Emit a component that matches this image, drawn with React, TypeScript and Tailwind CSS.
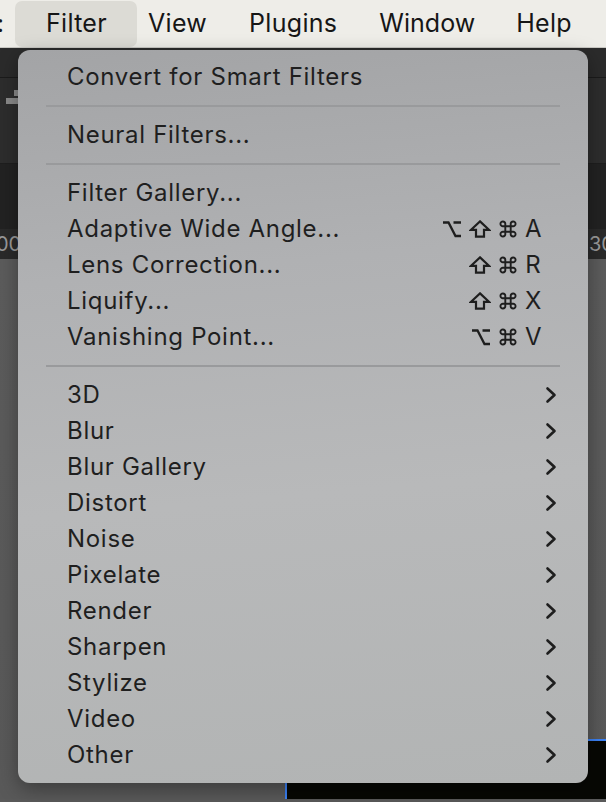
import React from "react";

const Chevron = () => (
  <svg width="12" height="18" viewBox="0 0 12 18" className="shrink-0">
    <path d="M2.5 2.5 L9.5 9 L2.5 15.5" fill="none" stroke="#1e1e1e" strokeWidth="2.6" strokeLinecap="round" strokeLinejoin="round" />
  </svg>
);

const Opt = () => (
  <svg width="20" height="18" viewBox="0 0 20 18">
    <path d="M1 2.5 H6.5 L13.5 16 H19 M11.5 2.5 H19" fill="none" stroke="#1e1e1e" strokeWidth="2.3" strokeLinejoin="miter" />
  </svg>
);

const Shift = () => (
  <svg width="22" height="18" viewBox="0 0 22 18">
    <path d="M11 1.4 L20 9.8 H15 V16.6 H7 V9.8 H2 Z" fill="none" stroke="#1e1e1e" strokeWidth="2.2" strokeLinejoin="miter" />
  </svg>
);

const Cmd = () => (
  <svg width="20" height="18" viewBox="0 0 20 20" className="h-[18px] w-[20px]">
    <path
      d="M7 7 V4.5 A2.7 2.7 0 1 0 4.5 7 H15.5 A2.7 2.7 0 1 0 13 4.5 V15.5 A2.7 2.7 0 1 0 15.5 13 H4.5 A2.7 2.7 0 1 0 7 15.5 V7"
      fill="none"
      stroke="#1e1e1e"
      strokeWidth="2.1"
    />
  </svg>
);

type Item = { label: string; shortcut?: string; sub?: boolean };

const groups: Item[][] = [
  [{ label: "Convert for Smart Filters" }],
  [{ label: "Neural Filters..." }],
  [
    { label: "Filter Gallery..." },
    { label: "Adaptive Wide Angle...", shortcut: "OSCA" },
    { label: "Lens Correction...", shortcut: "SCR" },
    { label: "Liquify...", shortcut: "SCX" },
    { label: "Vanishing Point...", shortcut: "OCV" },
  ],
  ["3D", "Blur", "Blur Gallery", "Distort", "Noise", "Pixelate", "Render", "Sharpen", "Stylize", "Video", "Other"].map((l) => ({ label: l, sub: true })),
];

const Shortcut = ({ s }: { s: string }) => {
  const mods = s.slice(0, -1).split("");
  const key = s.slice(-1);
  return (
    <span className="flex items-center gap-[7px] mr-[16px]">
      {mods.map((m, i) => (m === "O" ? <Opt key={i} /> : m === "S" ? <Shift key={i} /> : <Cmd key={i} />))}
      <span className="text-[24px] tracking-normal w-[16px] text-center">{key}</span>
    </span>
  );
};

const Row = ({ item }: { item: Item }) => (
  <div className="h-[36px] flex items-center pl-[49px] pr-[31px] text-[24px] tracking-[0.7px] text-[#1f1f1f] leading-none">
    <span className="flex-1">{item.label}</span>
    {item.shortcut && <Shortcut s={item.shortcut} />}
    {item.sub && <Chevron />}
  </div>
);

export default function App() {
  return (
    <div className="relative w-[606px] h-[802px] overflow-hidden bg-[#5a5a5a]" style={{ fontFamily: "Inter, 'Noto Sans', sans-serif" }}>
      {/* menu bar */}
      <div className="h-[48px] bg-[#eeede8] border-b border-[#c9c8c3] flex items-center text-[25px] tracking-[0.3px] text-[#161616] relative">
        <span className="absolute left-[-3px] top-[6px] text-[24px]">:</span>
        <div className="ml-[15px] w-[122px] h-[46px] rounded-[7px] bg-[#dcdbd5] flex items-center pl-[31px]">Filter</div>
        <span className="ml-[11px]">View</span>
        <span className="ml-[42px]">Plugins</span>
        <span className="ml-[42px] tracking-[0px]">Window</span>
        <span className="ml-[41px]">Help</span>
      </div>
      {/* background workspace */}
      <div className="flex flex-col">
        <div className="h-[30px] bg-[#2b2b2b] border-b border-[#1b1b1b]" />
        <div className="h-[86px] bg-[#2d2d2d] relative border-b border-[#1e1e1e]">
          <div className="absolute left-[14px] top-[12px] w-[6px] h-[6px] bg-[#8a8a8a]" />
          <div className="absolute left-[6px] top-[20px] w-[12px] h-[6px] bg-[#8a8a8a]" />
        </div>
        <div className="h-[65px] bg-[#222222]" />
        <div className="h-[30px] bg-[#2a2a2a] relative text-[#9a9a9a] text-[20px]">
          <span className="absolute left-[-4px] top-[0px]">00</span>
          <span className="absolute right-[-8px] top-[0px]">30</span>
        </div>
        <div className="h-[540px] bg-gradient-to-b from-[#5c5c5c] to-[#595959] relative">
          <div className="absolute left-[285px] top-[480px] right-0 bottom-0 bg-[#070804] border-l-2 border-t-2 border-[#3b82f6]" />
        </div>
      </div>
      {/* dropdown menu */}
      <div
        className="absolute left-[18px] top-[50px] w-[570px] h-[733px] rounded-[12px] pt-[9px] pb-[10px] shadow-[0_6px_20px_rgba(0,0,0,0.35)]"
        style={{ background: "linear-gradient(175deg, #a3a4a6 0%, #b0b1b3 30%, #b8b9ba 60%, #b2b4b4 100%)" }}
      >
        {groups.map((g, gi) => (
          <div key={gi}>
            {gi > 0 && (
              <div className="h-[22px] flex items-center px-[28px]">
                <div className="h-[2px] w-full bg-[#999a9c]" />
              </div>
            )}
            {g.map((it) => (
              <Row key={it.label} item={it} />
            ))}
          </div>
        ))}
      </div>
    </div>
  );
}
